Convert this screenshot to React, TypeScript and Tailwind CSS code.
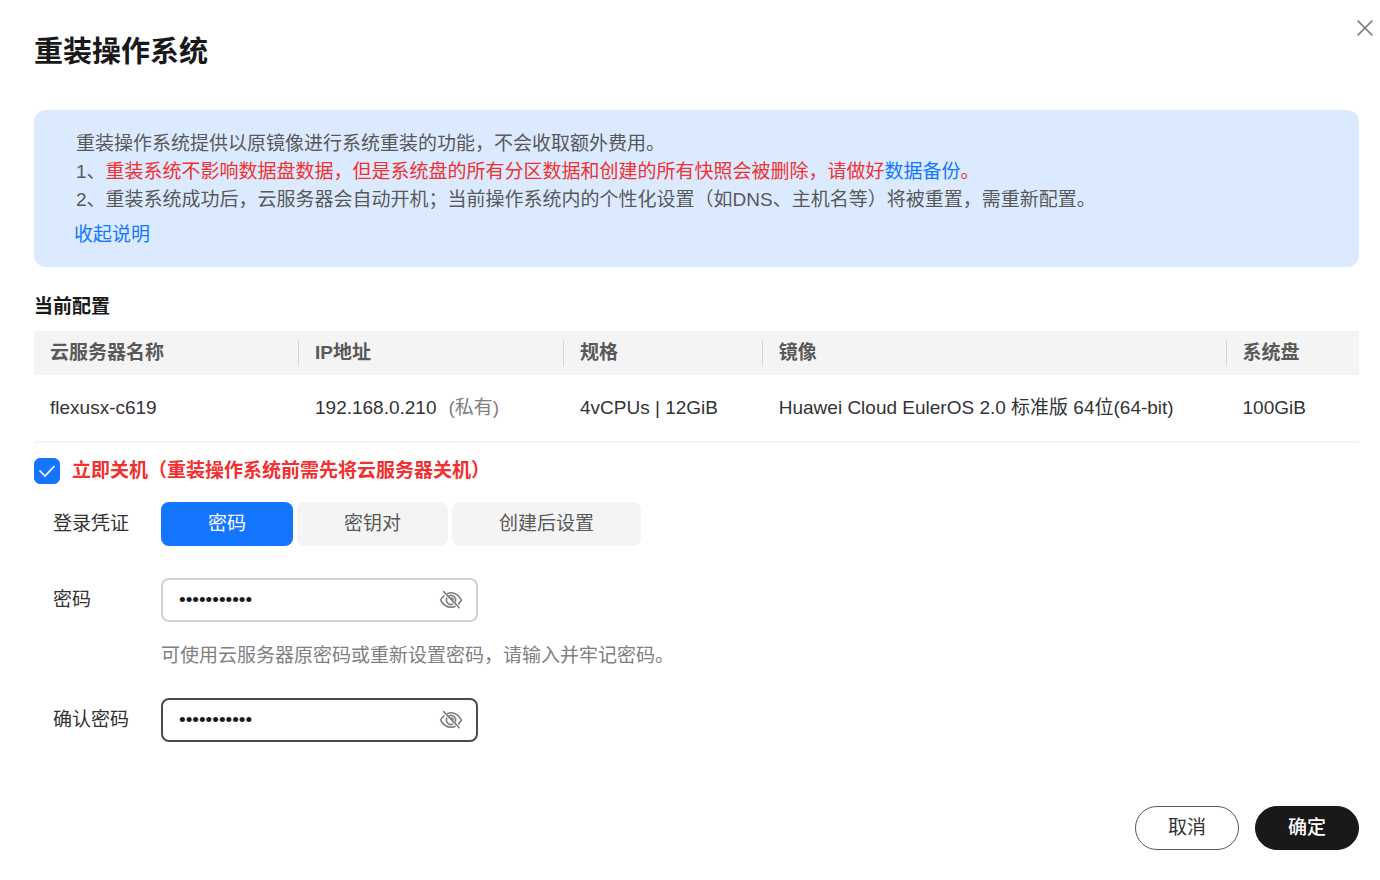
import { useState } from "react";

interface Server {
  name: string;
  ip: string;
  flavor: string;
  image: string;
  disk: string;
}

interface PasswordFieldProps {
  id: string;
  value: string;
  onChange: (value: string) => void;
  active?: boolean;
}

const server: Server = {
  name: "flexusx-c619",
  ip: "192.168.0.210",
  flavor: "4vCPUs | 12GiB",
  image: "Huawei Cloud EulerOS 2.0 标准版 64位(64-bit)",
  disk: "100GiB",
};

const columns = [
  { title: "云服务器名称", width: "w-[20%]" },
  { title: "IP地址", width: "w-[20%]" },
  { title: "规格", width: "w-[15%]" },
  { title: "镜像", width: "w-[35%]" },
  { title: "系统盘", width: "w-[10%]" },
];

const credentials = ["密码", "密钥对", "创建后设置"];

const EyeOffIcon = () => (
  <svg
    className="w-6 h-5"
    viewBox="0 0 24 20"
    fill="none"
    stroke="currentColor"
    strokeWidth={1.6}
    strokeLinecap="round"
    strokeLinejoin="round"
  >
    <path d="M8.6 3.4C9.7 3 10.8 2.8 12 2.8c4.4 0 8 2.7 10.4 7.2-.8 1.5-1.7 2.8-2.8 3.8" />
    <path d="M4.8 5.8C3.6 6.9 2.5 8.3 1.6 10c2.4 4.5 6 7.2 10.4 7.2 1.4 0 2.7-.3 3.9-.8" />
    <path d="M10.2 5.8A4.6 4.6 0 0 1 16.3 11.8" />
    <path d="M7.8 8.2A4.6 4.6 0 0 0 13.6 14.3" />
    <path d="M12 8A2.2 2.2 0 0 1 14.2 10" />
    <path d="M4.6 1.6L20.2 17.8" />
  </svg>
);

const PasswordField = ({ id, value, onChange, active }: PasswordFieldProps) => {
  const [visible, setVisible] = useState(false);

  return (
    <div
      className={`flex items-center w-[317px] h-11 pl-4 pr-[13px] rounded-lg bg-white ${
        active ? "border-2 border-[#4a4a4a]" : "border-2 border-[#d1d1d1]"
      }`}
    >
      <input
        id={id}
        type={visible ? "text" : "password"}
        value={value}
        onChange={(e) => onChange(e.target.value)}
        className="flex-1 min-w-0 bg-transparent text-[#191919] outline-none"
      />
      <button
        type="button"
        aria-label="显示密码"
        onClick={() => setVisible(!visible)}
        className="text-[#808080]"
      >
        <EyeOffIcon />
      </button>
    </div>
  );
};

const App = () => {
  const [shutdown, setShutdown] = useState(true);
  const [credential, setCredential] = useState("密码");
  const [password, setPassword] = useState("Flexus@2024");
  const [confirm, setConfirm] = useState("Flexus@2024");

  return (
    <div className="min-h-screen bg-white font-['Liberation_Sans','Noto_Sans_CJK_SC',sans-serif] text-[19px] leading-7 text-[#333333]">
      <header className="flex items-start justify-between pt-5 pl-[34px] pr-[7px]">
        <h1 className="mt-3.5 text-[29px] leading-9 font-bold text-[#191919]">
          重装操作系统
        </h1>
        <button type="button" aria-label="关闭" className="text-[#808080]">
          <svg
            className="w-4 h-4"
            viewBox="0 0 16 16"
            fill="none"
            stroke="currentColor"
            strokeWidth={1.6}
          >
            <path d="M0.6 0.6L15.4 15.4M15.4 0.6L0.6 15.4" />
          </svg>
        </button>
      </header>

      <main className="pl-[34px] pr-[21px]">
        <section className="mt-10 px-10 pt-5 pb-[18px] rounded-xl bg-[#dbeaff] text-[#595959]">
          <div className="px-0.5">
            <p>重装操作系统提供以原镜像进行系统重装的功能，不会收取额外费用。</p>
            <p>
              1、
              <span className="text-[#f23030]">
                重装系统不影响数据盘数据，但是系统盘的所有分区数据和创建的所有快照会被删除，请做好
                <a href="#backup" className="text-[#1476ff]">
                  数据备份
                </a>
                。
              </span>
            </p>
            <p>
              2、重装系统成功后，云服务器会自动开机；当前操作系统内的个性化设置（如DNS、主机名等）将被重置，需重新配置。
            </p>
          </div>
          <button type="button" className="block mt-[7px] text-[#1476ff]">
            收起说明
          </button>
        </section>

        <h2 className="mt-[26px] font-bold text-[#191919]">当前配置</h2>
        <table className="w-full mt-2.5 table-fixed text-left">
          <thead className="bg-[#f4f4f4] text-[#595959]">
            <tr>
              {columns.map((column, index) => (
                <th
                  key={column.title}
                  className={`${column.width} py-[9px] font-bold`}
                >
                  <div
                    className={`pl-4 leading-[26px] ${
                      index < columns.length - 1
                        ? "border-r border-[#d6d6d6]"
                        : ""
                    }`}
                  >
                    {column.title}
                  </div>
                </th>
              ))}
            </tr>
          </thead>
          <tbody>
            <tr className="h-[67px] border-b-2 border-[#f4f4f4]">
              <td className="pl-4">{server.name}</td>
              <td className="pl-4">
                {server.ip}
                <span className="ml-3 text-[#808080]">(私有)</span>
              </td>
              <td className="pl-4">{server.flavor}</td>
              <td className="pl-4 whitespace-nowrap">{server.image}</td>
              <td className="pl-4">{server.disk}</td>
            </tr>
          </tbody>
        </table>

        <label className="flex items-center mt-3.5 gap-3 font-bold text-[#f23030]">
          <span className="relative flex">
            <input
              type="checkbox"
              checked={shutdown}
              onChange={(e) => setShutdown(e.target.checked)}
              className="peer appearance-none w-[26px] h-[26px] rounded-md border border-[#c2c2c2] checked:border-[#1476ff] checked:bg-[#1476ff]"
            />
            <svg
              className="absolute inset-0 w-[26px] h-[26px] hidden peer-checked:block pointer-events-none"
              viewBox="0 0 26 26"
              fill="none"
              stroke="white"
              strokeWidth={1.7}
            >
              <path d="M5.5 12.5L11 18L20.5 8" />
            </svg>
          </span>
          立即关机（重装操作系统前需先将云服务器关机）
        </label>

        <form className="grid grid-cols-[108px_1fr] items-center mt-[17px] ml-[19px]">
          <span id="credential">登录凭证</span>
          <div
            role="group"
            aria-labelledby="credential"
            className="flex gap-1"
          >
            {credentials.map((item) => (
              <button
                key={item}
                type="button"
                aria-pressed={credential === item}
                onClick={() => setCredential(item)}
                className={`h-11 px-[47px] rounded-lg ${
                  credential === item
                    ? "bg-[#1476ff] text-white"
                    : "bg-[#f4f4f4] text-[#595959]"
                }`}
              >
                {item}
              </button>
            ))}
          </div>

          <label htmlFor="password" className="mt-8">
            密码
          </label>
          <div className="mt-8">
            <PasswordField
              id="password"
              value={password}
              onChange={setPassword}
            />
          </div>
          <p className="col-start-2 mt-5 text-[#808080]">
            可使用云服务器原密码或重新设置密码，请输入并牢记密码。
          </p>

          <label htmlFor="confirm" className="mt-7">
            确认密码
          </label>
          <div className="mt-7">
            <PasswordField
              id="confirm"
              value={confirm}
              onChange={setConfirm}
              active
            />
          </div>
        </form>
      </main>

      <footer className="flex justify-end gap-4 mt-16 pr-[21px]">
        <button
          type="button"
          className="h-11 px-8 rounded-full border border-[#595959]"
        >
          取消
        </button>
        <button
          type="button"
          className="h-11 px-8 rounded-full border border-[#191919] bg-[#191919] font-medium text-white"
        >
          确定
        </button>
      </footer>
    </div>
  );
};

export default App;
